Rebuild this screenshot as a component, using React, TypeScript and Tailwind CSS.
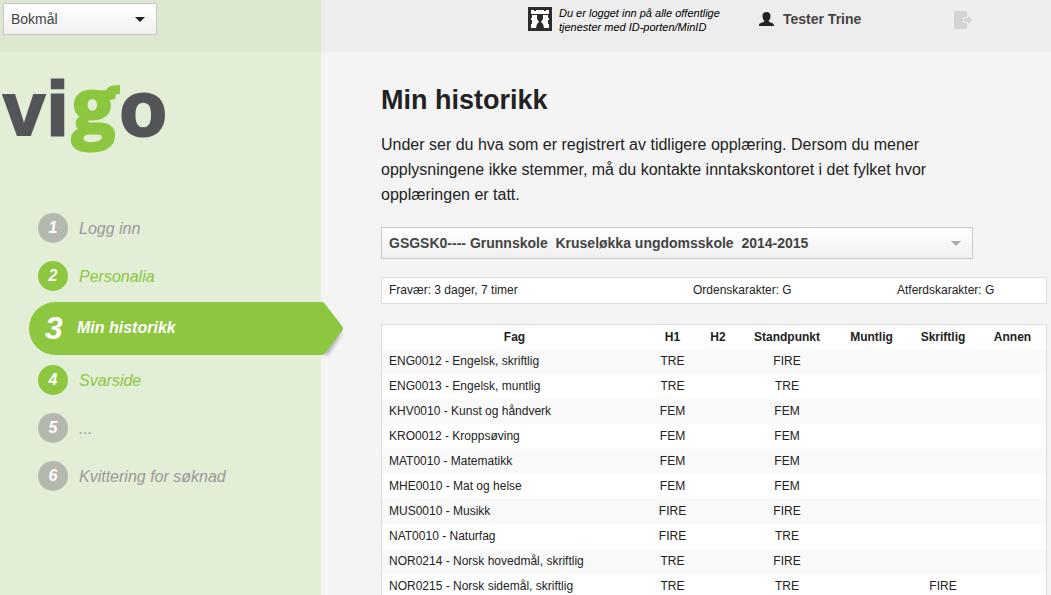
import React from "react";

type Step = { nr: number; label: string; state: "open" | "active" | "locked" };

const steps: Step[] = [
  { nr: 1, label: "Logg inn", state: "locked" },
  { nr: 2, label: "Personalia", state: "open" },
  { nr: 3, label: "Min historikk", state: "active" },
  { nr: 4, label: "Svarside", state: "open" },
  { nr: 5, label: "...", state: "locked" },
  { nr: 6, label: "Kvittering for søknad", state: "locked" },
];

type Grade = { fag: string; h1?: string; standpunkt?: string; skriftlig?: string };

const grades: Grade[] = [
  { fag: "ENG0012 - Engelsk, skriftlig", h1: "TRE", standpunkt: "FIRE" },
  { fag: "ENG0013 - Engelsk, muntlig", h1: "TRE", standpunkt: "TRE" },
  { fag: "KHV0010 - Kunst og håndverk", h1: "FEM", standpunkt: "FEM" },
  { fag: "KRO0012 - Kroppsøving", h1: "FEM", standpunkt: "FEM" },
  { fag: "MAT0010 - Matematikk", h1: "FEM", standpunkt: "FEM" },
  { fag: "MHE0010 - Mat og helse", h1: "FEM", standpunkt: "FEM" },
  { fag: "MUS0010 - Musikk", h1: "FIRE", standpunkt: "FIRE" },
  { fag: "NAT0010 - Naturfag", h1: "FIRE", standpunkt: "TRE" },
  { fag: "NOR0214 - Norsk hovedmål, skriftlig", h1: "TRE", standpunkt: "FIRE" },
  { fag: "NOR0215 - Norsk sidemål, skriftlig", h1: "TRE", standpunkt: "TRE", skriftlig: "FIRE" },
];

function Logo() {
  return (
    <svg
      width="180"
      height="110"
      viewBox="0 0 180 110"
      role="img"
      aria-label="vigo"
      className="block font-['Liberation_Sans',Arial,sans-serif] text-[76px] font-bold"
    >
      <g fill="#545558" stroke="#545558">
        <text x="3" y="83" strokeWidth="2">v</text>
        <text x="47" y="83" strokeWidth="3">i</text>
        <text x="120" y="83" strokeWidth="3">o</text>
      </g>
      <text
        x="72"
        y="81"
        fill="#8dc63f"
        stroke="#8dc63f"
        strokeWidth="3"
        className="font-['Open_Sans',sans-serif] text-[76px] font-bold"
      >
        g
      </text>
      <path d="M105 44C105 36 109 33 120 33V42C115 42 113 43 112 46Z" fill="#8dc63f" />
    </svg>
  );
}

function PortalIcon() {
  return (
    <svg width="24" height="24" viewBox="0 0 24 24" aria-hidden="true" className="shrink-0">
      <rect width="24" height="24" fill="#2d2b2c" />
      <path d="M3 3H6V4H8V3H16V4H18V3H21V7H3Z" fill="#fff" />
      <path d="M4 8H9V12L11 15L9 17L8 21H3V17H4V13H3V11H4Z" fill="#fff" />
      <path d="M20 8H15V12L13 15L15 17L16 21H21V17H20V13H21V11H20Z" fill="#fff" />
    </svg>
  );
}

function UserIcon() {
  return (
    <svg width="15" height="14" viewBox="0 0 15 14" aria-hidden="true" className="shrink-0">
      <path
        d="M7.500 0C10 0 11.500 1.500 11.500 4C11.500 6 10.800 7.600 9.800 8.700V9.700C11 10.600 14.800 10.800 15 13.200V14H0V13.200C.2 10.800 4 10.600 5.200 9.700V8.700C4.200 7.600 3.500 6 3.500 4C3.500 1.500 5 0 7.500 0Z"
        fill="#222"
      />
    </svg>
  );
}

function ExitIcon() {
  return (
    <svg width="19" height="18" viewBox="0 0 19 18" aria-hidden="true">
      <path d="M0 0H13V18H0Z" fill="#d3d3d3" />
      <path d="M9.500 6.500H14V4L19 9L14 14V11.500H9.500Z" fill="#d3d3d3" stroke="#ededed" strokeWidth="1" />
    </svg>
  );
}

function ArrowTip() {
  return (
    <svg width="30" height="60" viewBox="0 0 30 60" aria-hidden="true" className="absolute top-0 left-full">
      <defs>
        <filter id="tip-shadow" x="-50%" y="-50%" width="200%" height="200%">
          <feGaussianBlur stdDeviation="2" />
        </filter>
      </defs>
      <path d="M2 52L16 32L21 30L6 53Z" fill="#000" opacity="0.4" filter="url(#tip-shadow)" />
      <path d="M0 0C2 0 2 0 4 2L21 24Q23 26.500 21 29L4 51C2 53 2 53 0 53Z" fill="#8dc63f" />
    </svg>
  );
}

function StepItem({ step }: { step: Step }) {
  if (step.state === "active") {
    return (
      <li className="mt-0.5 mb-px pl-[29px]">
        <a
          href="#historikk"
          aria-current="step"
          className="relative flex h-[53px] items-center rounded-l-full bg-[#8dc63f] pb-0.5 pl-4 font-bold italic text-white"
        >
          <span className="w-8 text-[32px] leading-8">{step.nr}</span>
          <span className="leading-5">{step.label}</span>
          <ArrowTip />
        </a>
      </li>
    );
  }
  const open = step.state === "open";
  return (
    <li className="pl-[38px]">
      <a href={"#steg-" + step.nr} className="flex h-12 items-center gap-[11px] italic">
        <span
          className={
            "flex size-[30px] items-center justify-center rounded-full font-bold text-white " +
            (open ? "bg-[#8dc63f]" : "bg-[#b4b9af]")
          }
        >
          {step.nr}
        </span>
        <span className={open ? "pt-0.5 text-[#8dc63f]" : "pt-0.5 text-[#999999]"}>{step.label}</span>
      </a>
    </li>
  );
}

function Caret({ className }: { className: string }) {
  return (
    <svg
      width="10"
      height="5"
      viewBox="0 0 10 5"
      aria-hidden="true"
      className={"pointer-events-none absolute inset-y-0 my-auto " + className}
    >
      <path d="M0 0H10L5 5Z" fill="currentColor" />
    </svg>
  );
}

export default function App() {
  return (
    <div className="flex h-screen overflow-hidden bg-[#f4f4f4] font-['Liberation_Sans',Arial,sans-serif] text-base text-[#222]">
      <aside className="relative z-10 w-[321px] shrink-0 bg-[#e2eed6]">
        <div className="h-[52px] bg-[#dce8d0] p-[3px]">
          <div className="relative h-8 w-[154px]">
            <select
              aria-label="Språk"
              defaultValue="nb"
              className="h-full w-full appearance-none border border-[#c8c8c8] bg-linear-to-b from-white to-[#f0f0f0] pl-[7px] text-sm text-[#444]"
            >
              <option value="nb">Bokmål</option>
              <option value="nn">Nynorsk</option>
            </select>
            <Caret className="right-3 text-[#222]" />
          </div>
        </div>
        <a href="#hjem" className="block">
          <Logo />
        </a>
        <nav aria-label="Steg" className="mt-[42px]">
          <ol>
            {steps.map((step) => (
              <StepItem key={step.nr} step={step} />
            ))}
          </ol>
        </nav>
      </aside>

      <div className="min-w-0 flex-1 overflow-y-auto [scrollbar-width:none]">
        <header className="flex h-[52px] items-start bg-[#ededed] pt-[7px] pl-[207px]">
          <PortalIcon />
          <p className="-mt-px ml-[7px] w-50 text-[11px] leading-[14px] text-black italic">
            Du er logget inn på alle offentlige
            <br />
            tjenester med ID-porten/MinID
          </p>
          <div className="mt-1 flex items-center gap-[9px] text-sm leading-4 font-bold text-[#444]">
            <UserIcon />
            <span>Tester Trine</span>
          </div>
          <button type="button" aria-label="Logg ut" className="mt-1 mr-[78px] ml-auto">
            <ExitIcon />
          </button>
        </header>

        <main className="pt-7 pr-1 pl-[60px]">
          <h1 className="text-[27px] leading-10 font-bold">Min historikk</h1>
          <p className="mt-3 max-w-[592px] leading-[25px]">
            Under ser du hva som er registrert av tidligere opplæring. Dersom du mener opplysningene ikke stemmer, må du
            kontakte inntakskontoret i det fylket hvor opplæringen er tatt.
          </p>

          <div className="relative mt-5 h-8 max-w-[592px]">
            <select
              aria-label="Skole og skoleår"
              className="h-full w-full appearance-none border border-[#c8c8c8] bg-linear-to-b from-white to-[#f0f0f0] pl-[7px] text-sm font-bold text-[#444]"
            >
              <option>{"GSGSK0---- Grunnskole\u00a0 Kruseløkka ungdomsskole\u00a0 2014-2015"}</option>
            </select>
            <Caret className="right-3 text-[#aaa]" />
          </div>

          <div className="mt-[18px] grid grid-cols-[304px_204px_1fr] border border-[#dddddd] bg-white px-[7px] text-xs leading-[25px]">
            <span>Fravær: 3 dager, 7 timer</span>
            <span>Ordenskarakter: G</span>
            <span>Atferdskarakter: G</span>
          </div>

          <div className="mt-5 border border-[#dddddd] bg-white">
            <table className="w-full table-fixed text-center text-xs">
              <colgroup>
                <col />
                <col className="w-[51px]" />
                <col className="w-10" />
                <col className="w-[98px]" />
                <col className="w-[71px]" />
                <col className="w-[72px]" />
                <col className="w-[67px]" />
              </colgroup>
              <thead>
                <tr className="h-6">
                  <th>Fag</th>
                  <th>H1</th>
                  <th>H2</th>
                  <th>Standpunkt</th>
                  <th>Muntlig</th>
                  <th>Skriftlig</th>
                  <th>Annen</th>
                </tr>
              </thead>
              <tbody>
                {grades.map((g) => (
                  <tr key={g.fag} className="h-[25px] odd:bg-[#f9f9f9] [&>td]:pb-0.5">
                    <td className="pl-[7px] text-left">{g.fag}</td>
                    <td>{g.h1}</td>
                    <td />
                    <td>{g.standpunkt}</td>
                    <td />
                    <td>{g.skriftlig}</td>
                    <td />
                  </tr>
                ))}
              </tbody>
            </table>
          </div>
        </main>
      </div>
    </div>
  );
}
